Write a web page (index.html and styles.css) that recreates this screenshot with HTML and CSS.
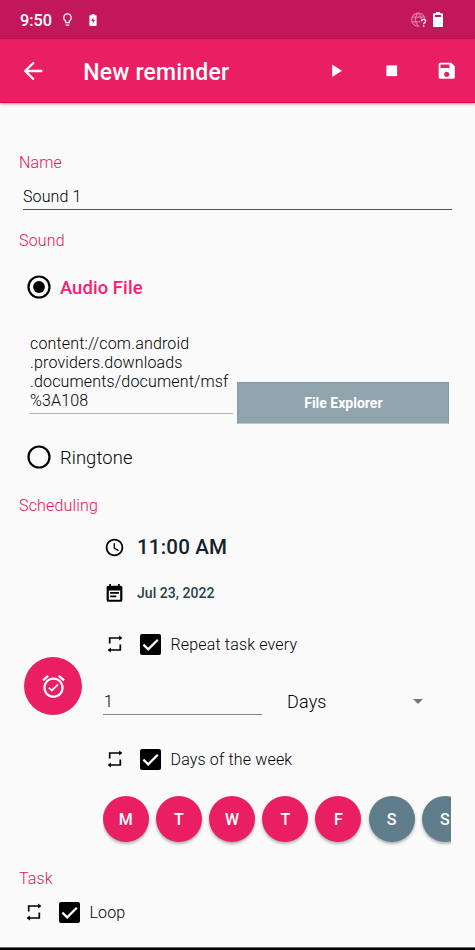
FILE: index.html
```html
<!DOCTYPE html>
<html lang="en">
<head>
<meta charset="utf-8">
<title>New reminder</title>
<link rel="stylesheet" href="styles.css">
</head>
<body>
<svg class="defs" width="0" height="0">
  <symbol id="repeat" viewBox="0 0 18 18">
    <g id="half"><path d="M3.700 8.500V3H14" fill="none" stroke="#000" stroke-width="1.700"/><path d="M13.200.5l3.200 2.500-3.200 2.500z"/></g>
    <use href="#half" transform="rotate(180 9 9)"/>
  </symbol>
  <symbol id="check" viewBox="0 0 21 21">
    <rect width="21" height="21" rx="2"/>
    <path d="M3.400 10.600l4.800 4.800 9.600-9.600" fill="none" stroke="#fff" stroke-width="2.200"/>
  </symbol>
</svg>
<div class="screen">
  <header class="status">
    <span class="clock">9:50</span>
    <svg class="bulb" viewBox="0 0 24 24"><path d="M9 21c0 .55.45 1 1 1h4c.55 0 1-.45 1-1v-1H9v1zm3-19C8.140 2 5 5.140 5 9c0 2.380 1.190 4.470 3 5.740V17c0 .55.45 1 1 1h6c.55 0 1-.45 1-1v-2.260c1.810-1.270 3-3.360 3-5.740 0-3.860-3.140-7-7-7zm2.850 11.100l-.85.6V16h-4v-2.300l-.85-.6C7.800 12.160 7 10.630 7 9c0-2.760 2.240-5 5-5s5 2.240 5 5c0 1.630-.8 3.160-2.150 4.100z"/></svg>
    <svg class="charge" viewBox="0 0 8 12"><path fill-rule="evenodd" d="M2.600 0h2.800v1.200H7a.6.6 0 0 1 .6.6v9.500a.6.6 0 0 1-.6.6H1a.6.6 0 0 1-.6-.6V1.800a.6.6 0 0 1 .6-.6h1.600zM4.400 3.400L2.200 7h1.500v2.700L5.900 6H4.400z"/></svg>
    <span class="grow"></span>
    <svg class="globe" viewBox="0 0 16 16"><g fill="none" stroke="#fff" stroke-opacity=".42" stroke-width="1.200"><path d="M8.500 14.100A6.600 6.600 0 1 1 13.900 7M1 5.200h12.400M1 9.800h8.500M7.300 14.200C3.400 10.500 3.400 4.500 7.300.9c2 1.900 3 4 3 6.600"/></g><path d="M10.600 9.200c0-2.400 4-2.400 4-.1 0 1.600-2 1.600-2 3.200" fill="none" stroke="#fff" stroke-width="1.400"/><path d="M11.900 13.300h1.500v1.500h-1.500z"/></svg>
    <svg class="battery" viewBox="0 0 10 15"><path fill-rule="evenodd" d="M3 0h4v1.300h2a1 1 0 0 1 1 1V14a1 1 0 0 1-1 1H1a1 1 0 0 1-1-1V2.300a1 1 0 0 1 1-1h2zM2 3v2h6V3z"/></svg>
  </header>
  <div class="appbar">
    <svg class="back" viewBox="0 0 24 24"><path d="M20 11H7.830l5.590-5.590L12 4l-8 8 8 8 1.410-1.410L7.830 13H20v-2z"/></svg>
    <h1>New reminder</h1>
    <svg class="action" viewBox="0 0 24 24"><path d="M8 5v14l11-7z"/></svg>
    <svg class="action" viewBox="0 0 24 24"><path d="M6 6h12v12H6z"/></svg>
    <svg class="action" viewBox="0 0 24 24"><path d="M17 3H5c-1.110 0-2 .9-2 2v14c0 1.100.89 2 2 2h14c1.100 0 2-.9 2-2V7l-4-4zm-5 16c-1.660 0-3-1.340-3-3s1.340-3 3-3 3 1.340 3 3-1.340 3-3 3zm3-10H5V5h10v4z"/></svg>
  </div>
  <main>
    <h2 class="name-label">Name</h2>
    <div class="field name"><span>Sound 1</span></div>
    <h2 class="sound-label">Sound</h2>
    <div class="radio audio">
      <svg viewBox="0 0 24 24"><circle cx="12" cy="12" r="10.500" fill="none" stroke="#000" stroke-width="2.200"/><circle cx="12" cy="12" r="5.900"/></svg>
      <span>Audio File</span>
    </div>
    <div class="file">
      <div class="path">content://com.android<br>.providers.downloads<br>.documents/document/msf<br>%3A108</div>
      <div class="button">File Explorer</div>
    </div>
    <div class="radio ringtone">
      <svg viewBox="0 0 24 24"><circle cx="12" cy="12" r="10.500" fill="none" stroke="#000" stroke-width="2.200"/></svg>
      <span>Ringtone</span>
    </div>
    <h2 class="sched-label">Scheduling</h2>
    <section class="schedule">
      <div class="side"><div class="fab">
        <svg viewBox="0 0 24 24"><path d="M22 5.720l-4.600-3.860-1.290 1.530 4.600 3.860L22 5.720zM7.880 3.390L6.600 1.860 2 5.710l1.290 1.530 4.590-3.850zM12 4c-4.970 0-9 4.030-9 9s4.020 9 9 9c4.970 0 9-4.030 9-9s-4.030-9-9-9zm0 16c-3.870 0-7-3.130-7-7s3.130-7 7-7 7 3.130 7 7-3.130 7-7 7zm-1.460-5.470L8.410 12.400l-1.060 1.060 3.180 3.180 6-6-1.060-1.060-4.930 4.950z"/></svg>
      </div></div>
      <div class="details">
        <div class="when">
          <svg viewBox="0 0 24 24"><path d="M11.990 2C6.470 2 2 6.480 2 12s4.470 10 9.990 10C17.520 22 22 17.520 22 12S17.520 2 11.990 2zM12 20c-4.420 0-8-3.580-8-8s3.580-8 8-8 8 3.580 8 8-3.580 8-8 8zm.5-13H11v6l5.250 3.150.75-1.230-4.500-2.670z"/></svg>
          <span class="time">11:00 AM</span>
        </div>
        <div class="when date-row">
          <svg viewBox="0 0 24 24"><path fill-rule="evenodd" d="M19 3h-1V1h-2v2H8V1H6v2H5c-1.300 0-2 .9-2 2v14c0 1.300.7 2.500 2 2.500h14c1.300 0 2-1.200 2-2.500V5c0-1.100-.9-2-2-2zM5.500 8.500h13v10.500h-13zM7 10.300h10v2H7zM7 14.300h7v2H7z"/></svg>
          <span class="date">Jul 23, 2022</span>
        </div>
        <div class="option every"><svg class="rep"><use href="#repeat"/></svg><svg class="box"><use href="#check"/></svg><span>Repeat task every</span></div>
        <div class="interval">
          <div class="count">1</div>
          <div class="unit"><span>Days</span><i class="caret"></i></div>
        </div>
        <div class="option week"><svg class="rep"><use href="#repeat"/></svg><svg class="box"><use href="#check"/></svg><span>Days of the week</span></div>
        <div class="days">
          <b>M</b><b>T</b><b>W</b><b>T</b><b>F</b><b class="off">S</b><b class="off">S</b>
        </div>
      </div>
    </section>
    <h2 class="task-label">Task</h2>
    <div class="option loop"><svg class="rep"><use href="#repeat"/></svg><svg class="box"><use href="#check"/></svg><span>Loop</span></div>
  </main>
  <footer></footer>
</div>
</body>
</html>
```
FILE: styles.css
```css
* { box-sizing: border-box; }
body { margin: 0; font-family: Roboto, "Liberation Sans", sans-serif; font-size: 16px; font-weight: 350; letter-spacing: .16px; color: #000; }
svg { display: block; flex: none; }
.defs { position: absolute; }
.screen { width: 475px; height: 950px; display: flex; flex-direction: column; background: #fafafa; overflow: hidden; }
.status { height: 39px; flex: none; background: #c2185b; display: flex; align-items: center; padding: 0 32px 0 20px; color: #fff; fill: #fff; }
.clock { width: 39.500px; font-size: 16.300px; font-weight: 500; letter-spacing: 0; padding-top: 2px; }
.bulb { width: 15px; height: 15px; }
.charge { width: 8px; height: 12px; margin-left: 14px; }
.grow { flex: 1; }
.globe { width: 16px; height: 16px; margin-right: 6px; }
.battery { width: 10px; height: 15px; }
.appbar { height: 64px; flex: none; background: #e91e63; border-bottom: 1px solid #e00052; box-shadow: 0 1px 3px rgba(0,0,0,.4); display: flex; align-items: center; padding: 0 17.500px 0 18.500px; fill: #fff; color: #fff; }
.back { width: 28px; height: 28px; }
h1 { flex: 1; margin: 0 0 0 36.800px; font-size: 23px; font-weight: 500; letter-spacing: .18px; padding-top: 4px; white-space: nowrap; }
.action { width: 21.500px; height: 21.500px; margin-left: 34px; }
main { flex: 1; min-height: 0; padding: 0 24px 0 19px; }
h2 { margin: 0; height: 20px; line-height: 20px; font-size: 16px; font-weight: 350; color: #ee0f5b; }
.name-label { margin-top: 50px; }
.field { margin: 13px -1px 0 4px; height: 24px; line-height: 22px; border-bottom: 1px solid #555; letter-spacing: .1px; }
.sound-label { margin-top: 21px; }
.radio { display: flex; align-items: center; height: 24px; font-size: 18.400px; margin-left: 8.400px; letter-spacing: .1px; }
.radio svg { width: 24px; height: 24px; margin-right: 8.500px; }
.radio span { padding-top: 1px; }
.audio { margin-top: 23.500px; }
.audio span { font-weight: 500; color: #f91c70; }
.file { display: flex; align-items: flex-end; margin: 35.500px 0 0 11px; height: 90px; }
.path { width: 203px; height: 80px; line-height: 19px; border-bottom: 1px solid #b5b5b5; margin-bottom: 10px; white-space: nowrap; }
.button { width: 212px; height: 42px; margin-left: 4.400px; background: #90a4ae; border: 1px solid #849aa5; border-bottom-color: #bdc8ce; color: #fff; font-size: 14px; font-weight: 700; letter-spacing: 0; display: flex; align-items: center; justify-content: center; }
.ringtone { margin-top: 21px; }
.sched-label { margin-top: 27px; }
.schedule { display: flex; margin-left: 5px; height: 341px; }
.side { width: 79px; padding-top: 141px; flex: none; }
.fab { width: 58px; height: 58px; border-radius: 50%; background: #e91e63; display: flex; align-items: center; justify-content: center; }
.fab svg { width: 27px; height: 27px; fill: #fff; }
.details { flex: 1; min-width: 0; }
.when { display: flex; align-items: center; height: 24px; margin: 19px 0 0 1px; }
.when svg { width: 21px; height: 21px; margin-right: 12px; }
.time { font-size: 20.500px; font-weight: 500; letter-spacing: .2px; color: #14222a; }
.date-row { margin-top: 22px; }
.date { font-size: 14px; font-weight: 500; letter-spacing: .04px; color: #263f4b; }
.option { display: flex; align-items: center; height: 24px; }
.rep { width: 18px; height: 18px; }
.box { width: 21px; height: 21px; margin: 0 9.500px 0 16px; }
.every { margin: 27px 0 0 3px; }
.interval { display: flex; margin-top: 32px; height: 27px; }
.count { width: 159px; height: 27px; line-height: 28px; padding-left: 1px; border-bottom: 1px solid #858585; }
.unit { display: flex; align-items: center; justify-content: space-between; width: 136px; margin-left: 25px; font-size: 18px; }
.caret { border: 5.500px solid transparent; border-top-color: #757575; border-bottom: 0; }
.week { margin: 32px 0 0 3px; }
.days { display: flex; gap: 7.200px; height: 54px; margin: 25px 0 0 -.3px; width: 348px; overflow: hidden; }
.days b { flex: none; width: 46px; height: 46px; border-radius: 50%; background: #e91e63; color: #fff; font-weight: 500; font-size: 16px; letter-spacing: 0; padding-top: 1px; display: flex; align-items: center; justify-content: center; box-shadow: 0 2px 3px rgba(0,0,0,.3); }
.days b.off { background: #607d8b; }
.task-label { margin-top: 12px; }
.loop { margin: 11px 0 0 6px; }
footer { flex: none; height: 3px; background: #000; border-top: 1px solid #666; }
```
